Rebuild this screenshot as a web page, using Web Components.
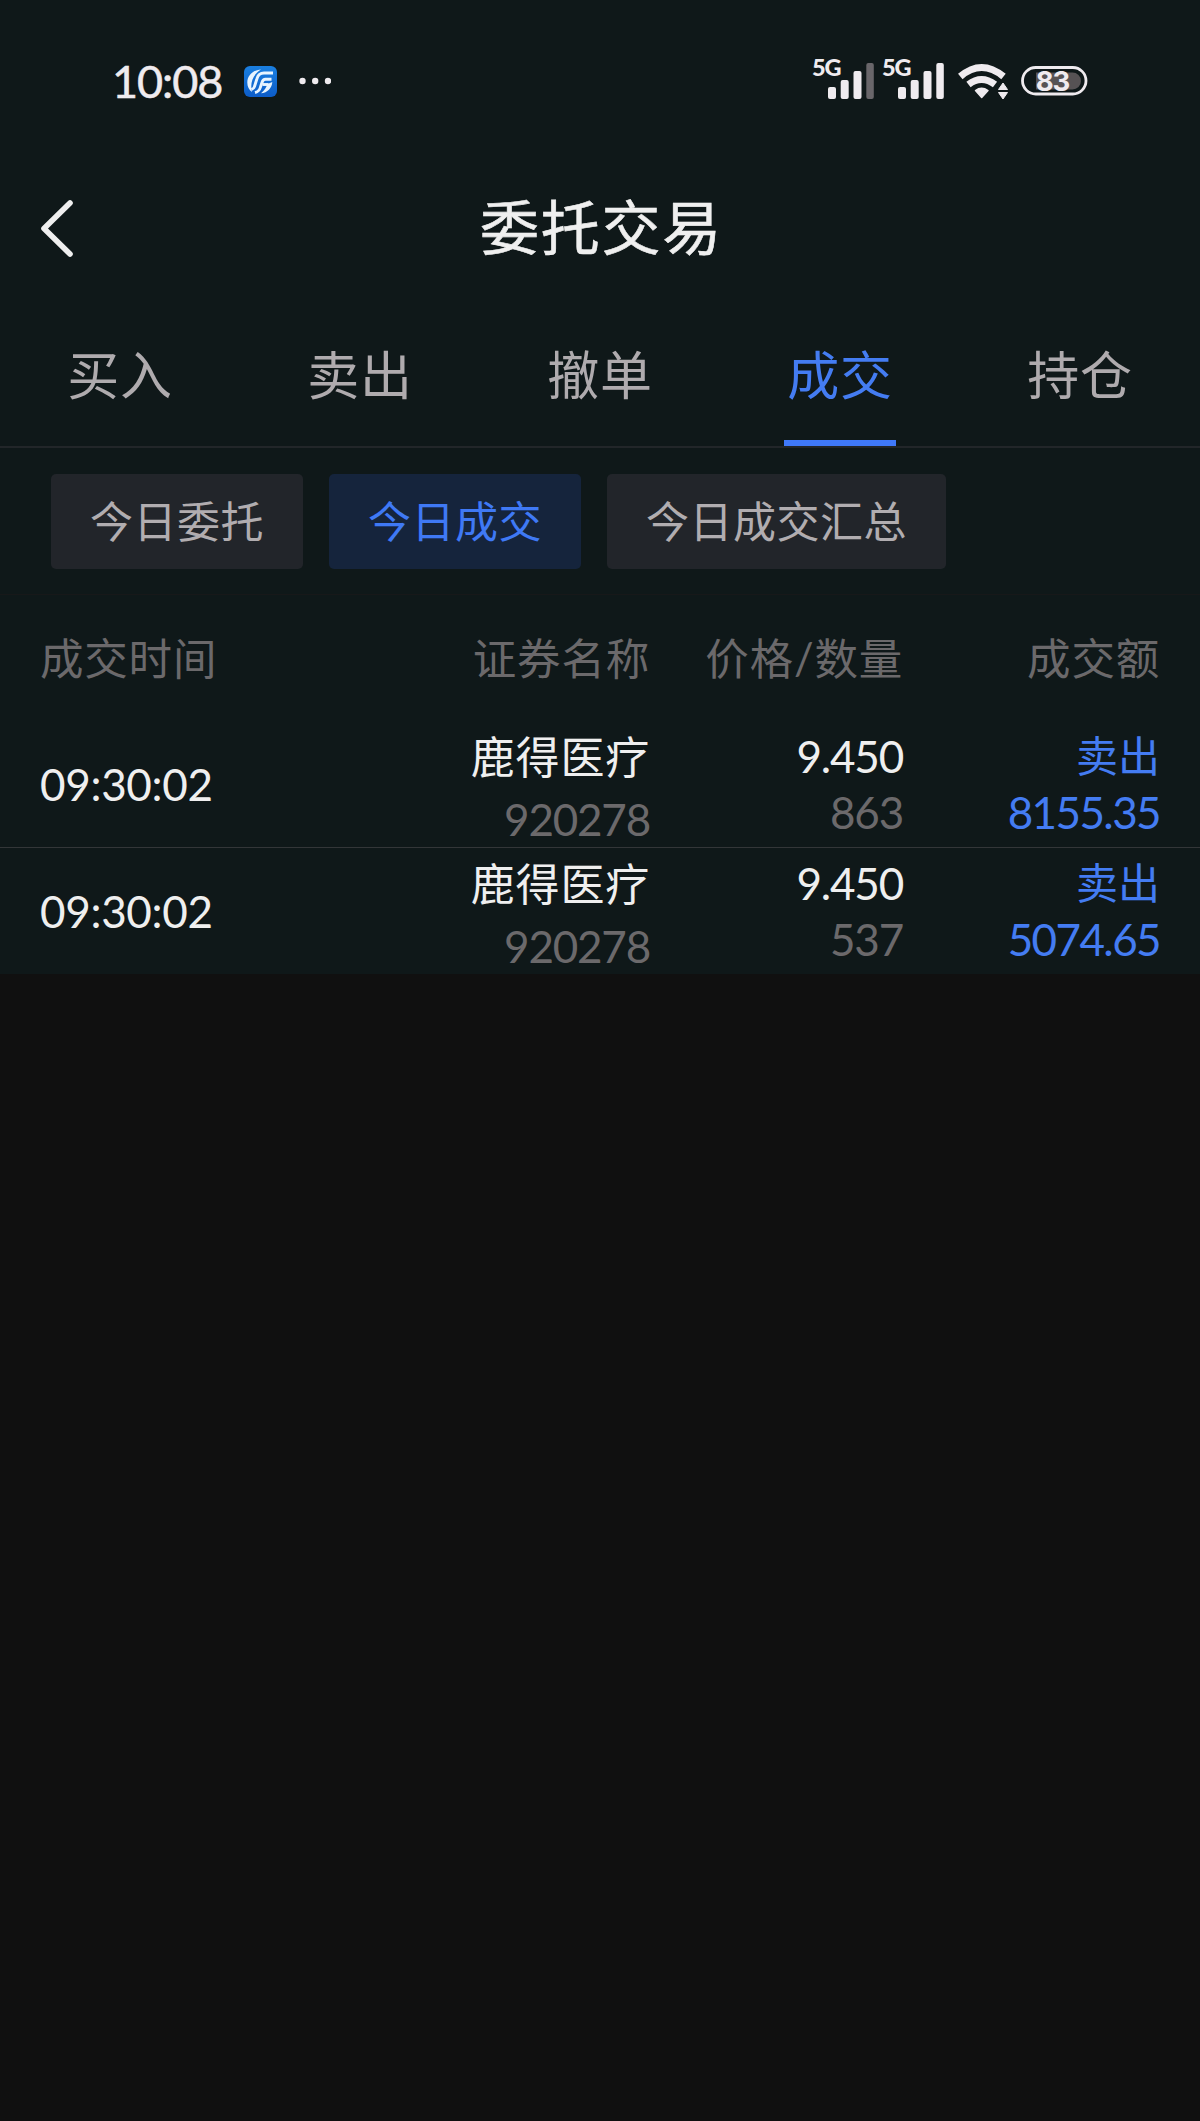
<!DOCTYPE html>
<html lang="zh-CN">
<head>
<meta charset="utf-8">
<title>委托交易</title>
<style>
  html, body { margin: 0; padding: 0; }
  body {
    background: #101010;
    font-family: Lato, "Noto Sans CJK SC", sans-serif;
    color: #efefef;
  }
</style>
</head>
<body>
<trade-page>
  <status-bar slot="status" time="10:08" battery="83"></status-bar>
  <page-header slot="header">委托交易</page-header>
  <trade-tabs slot="tabs">
    <trade-tab>买入</trade-tab>
    <trade-tab>卖出</trade-tab>
    <trade-tab>撤单</trade-tab>
    <trade-tab active>成交</trade-tab>
    <trade-tab>持仓</trade-tab>
  </trade-tabs>
  <chip-bar slot="chips">
    <filter-chip>今日委托</filter-chip>
    <filter-chip active>今日成交</filter-chip>
    <filter-chip>今日成交汇总</filter-chip>
  </chip-bar>
  <deal-table></deal-table>
</trade-page>

<script>
(function () {
  class TradePage extends HTMLElement {
    constructor() {
      super();
      this.attachShadow({ mode: "open" });
      this.shadowRoot.innerHTML =
        "<style>" +
        ":host{display:flex;flex-direction:column;width:1200px;background:#0f1819;}" +
        "</style>" +
        "<slot name='status'></slot>" +
        "<slot name='header'></slot>" +
        "<slot name='tabs'></slot>" +
        "<slot name='chips'></slot>" +
        "<slot></slot>";
    }
  }

  class SignalIcon extends HTMLElement {
    constructor() {
      super();
      this.attachShadow({ mode: "open" });
    }

    connectedCallback() {
      var last = this.hasAttribute("weak") ? "#69666a" : "#efebef";
      this.shadowRoot.innerHTML =
        "<style>" +
        ":host{display:block;position:relative;width:62px;height:45px;}" +
        "span{position:absolute;left:0;top:0;font-size:23.5px;line-height:24px;font-weight:900;letter-spacing:-1.2px;color:#efebef;}" +
        "svg{display:block;}" +
        "</style>" +
        "<svg width='62' height='45' fill='#efebef'>" +
        "<rect x='16' y='32' width='8' height='12' rx='2'/>" +
        "<rect x='28.7' y='25' width='8' height='19' rx='2'/>" +
        "<rect x='41.5' y='16' width='8' height='28' rx='2'/>" +
        "<rect x='54.3' y='8' width='7.5' height='36' rx='2' fill='" + last + "'/>" +
        "</svg>" +
        "<span>5G</span>";
    }
  }

  class StatusBar extends HTMLElement {
    constructor() {
      super();
      this.attachShadow({ mode: "open" });
    }

    connectedCallback() {
      this.shadowRoot.innerHTML =
        "<style>" +
        ":host{display:flex;align-items:center;justify-content:space-between;height:162px;box-sizing:border-box;padding:0 112px;color:#efebef;}" +
        ".left,.right{display:flex;align-items:center;}" +
        ".time{width:132px;font-size:45px;line-height:56px;letter-spacing:-1.1px;-webkit-text-stroke:.5px #efebef;}" +
        ".app{width:33px;height:31px;}" +
        ".dots{width:32px;height:8px;margin-left:22px;}" +
        "signal-icon{margin:0 8px 7px 0;}" +
        ".wifi{width:54px;height:40px;margin-left:5px;}" +
        ".battery{position:relative;width:67px;height:30px;margin-left:10px;}" +
        ".battery b{position:absolute;left:0;top:0;width:63px;text-align:center;font-family:Inter,sans-serif;font-size:27.5px;line-height:30px;font-weight:700;letter-spacing:-1px;}" +
        "svg{display:block;}" +
        "</style>" +
        "<div class='left'>" +
        "<span class='time'>" + this.getAttribute("time") + "</span>" +
        "<svg class='app' viewBox='0 0 33 31'>" +
        "<defs><linearGradient id='g' x1='0' y1='0' x2='0' y2='1'><stop offset='0' stop-color='#1a7fe0'/><stop offset='1' stop-color='#0c5cc8'/></linearGradient></defs>" +
        "<rect width='33' height='31' rx='6' fill='url(#g)'/>" +
        "<path d='M17 3.500C9 4 3.300 9.500 3.300 16.500C3.300 20.500 5 24 8 26C6 18 8 9 17 3.500z' fill='#e8f4ff'/>" +
        "<g fill='none' stroke='#e8f4ff' stroke-width='2.900'>" +
        "<path d='M29 7H20Q14.500 7 13 12.500L10.500 20.500Q10 22.500 7.500 23.500'/>" +
        "<path d='M27.500 13.300H21.500Q19 13.300 18 16.500L16.500 21Q15.300 25.500 11 26.500'/>" +
        "<path d='M24.500 18.500H18.500'/>" +
        "</g>" +
        "<path d='M28.300 16C28 22 23.500 26.800 17 27.300C20.500 24.500 22.500 21 23.500 18z' fill='#e8f4ff'/>" +
        "</svg>" +
        "<svg class='dots' viewBox='0 0 32 8' fill='#efebef'><circle cx='3.500' cy='4' r='3.200'/><circle cx='16.200' cy='4' r='3.200'/><circle cx='29' cy='4' r='3.200'/></svg>" +
        "</div>" +
        "<div class='right'>" +
        "<signal-icon weak></signal-icon>" +
        "<signal-icon></signal-icon>" +
        "<svg class='wifi' viewBox='0 0 54 40'>" +
        "<g fill='none' stroke='#efebef' stroke-width='7'>" +
        "<path d='M3.300 15.500Q24.500-2.500 46.500 15.500'/>" +
        "<path d='M11.500 23.500Q24.500 13.500 38 23.500'/>" +
        "</g>" +
        "<path d='M18.500 29.500Q24.500 25 31 29.500L24.700 36.500z' fill='#efebef' stroke='#efebef' stroke-width='1.500' stroke-linejoin='round'/>" +
        "<path d='M41.500 28.500L46 22l4.500 6.500zM41.500 31.500h9L46 38z' fill='#efebef' stroke='#efebef' stroke-linejoin='round'/>" +
        "</svg>" +
        "<div class='battery'>" +
        "<svg width='67' height='30'>" +
        "<path d='M15 6.500H51.500a8.500 8.500 0 0 1 0 17H15z' fill='#565254'/>" +
        "<rect x='1.500' y='1.500' width='63.500' height='26.500' rx='13.250' fill='none' stroke='#efebef' stroke-width='2.800'/>" +
        "</svg>" +
        "<b>" + this.getAttribute("battery") + "</b>" +
        "</div>" +
        "</div>";
    }
  }

  class PageHeader extends HTMLElement {
    constructor() {
      super();
      this.attachShadow({ mode: "open" });
      this.shadowRoot.innerHTML =
        "<style>" +
        ":host{display:grid;grid-template-columns:120px 1fr 117px;align-items:center;height:132px;}" +
        "svg{display:block;margin-left:40px;}" +
        "h1{margin:0;text-align:center;font-size:59px;line-height:82px;font-weight:400;letter-spacing:1.8px;-webkit-text-stroke:.6px #efefef;}" +
        "</style>" +
        "<svg width='36' height='62' fill='none' stroke='#efefef' stroke-width='5.600' stroke-linecap='round' stroke-linejoin='round'><path d='M30 6L4 31.500L30 57'/></svg>" +
        "<h1><slot></slot></h1>";
    }
  }

  class TradeTabs extends HTMLElement {
    constructor() {
      super();
      this.attachShadow({ mode: "open" });
      this.shadowRoot.innerHTML =
        "<style>" +
        ":host{display:grid;grid-template-columns:repeat(5,1fr);height:152px;border-bottom:2px solid #222629;}" +
        "</style>" +
        "<slot></slot>";
    }
  }

  class TradeTab extends HTMLElement {
    constructor() {
      super();
      this.attachShadow({ mode: "open" });
      this.shadowRoot.innerHTML =
        "<style>" +
        ":host{display:flex;flex-direction:column;align-items:center;justify-content:flex-end;color:#afabae;font-size:52px;}" +
        ":host([active]){color:#447cf2;}" +
        "span{line-height:80px;margin-bottom:25px;letter-spacing:.8px;}" +
        "i{display:block;width:112px;height:6px;}" +
        ":host([active]) i{background:#3f79fa;}" +
        "</style>" +
        "<span><slot></slot></span><i></i>";
    }
  }

  class ChipBar extends HTMLElement {
    constructor() {
      super();
      this.attachShadow({ mode: "open" });
      this.shadowRoot.innerHTML =
        "<style>" +
        ":host{display:flex;align-items:flex-start;gap:26px;height:147px;box-sizing:border-box;padding:26px 51px 0;border-bottom:1px solid #171819;}" +
        "</style>" +
        "<slot></slot>";
    }
  }

  class FilterChip extends HTMLElement {
    constructor() {
      super();
      this.attachShadow({ mode: "open" });
      this.shadowRoot.innerHTML =
        "<style>" +
        ":host{display:block;height:95px;line-height:95px;padding:0 39px;border-radius:5px;background:#22252a;color:#b1adb0;font-size:43px;letter-spacing:.5px;}" +
        ":host([active]){background:#15243c;color:#3f79f5;}" +
        "</style>" +
        "<slot></slot>";
    }
  }

  var DEALS = [
    { time: "09:30:02", name: "鹿得医疗", code: "920278", price: "9.450", count: "863", side: "卖出", amount: "8155.35" },
    { time: "09:30:02", name: "鹿得医疗", code: "920278", price: "9.450", count: "537", side: "卖出", amount: "5074.65" }
  ];

  class DealTable extends HTMLElement {
    constructor() {
      super();
      this.attachShadow({ mode: "open" });
    }

    connectedCallback() {
      var rows = "";
      for (var i = 0; i < DEALS.length; i++) {
        var d = DEALS[i];
        rows +=
          "<div class='row deal'>" +
          "<div class='time'>" + d.time + "</div>" +
          "<div class='name'><span>" + d.name + "</span><span class='sub'>" + d.code + "</span></div>" +
          "<div class='price'><span>" + d.price + "</span><span class='sub'>" + d.count + "</span></div>" +
          "<div class='amount'><span class='side'>" + d.side + "</span><span>" + d.amount + "</span></div>" +
          "</div>";
      }

      this.shadowRoot.innerHTML =
        "<style>" +
        ":host{display:block;}" +
        ".row{display:grid;grid-template-columns:360px 250px 253px 257px;padding:0 40px;font-size:44px;}" +
        ".row>:not(:first-child){text-align:right;}" +
        ".head{height:126px;line-height:127px;font-size:43.500px;letter-spacing:.8px;color:#6b696b;}" +
        ".deal{height:126px;letter-spacing:-1.2px;}" +
        ".deal+.deal{border-top:1px solid #333638;}" +
        ".deal>div{display:flex;flex-direction:column;}" +
        ".deal .time{line-height:127px;letter-spacing:-.3px;}" +
        ".name{padding-top:6px;}" +
        ".name span{line-height:60px;letter-spacing:.8px;}" +
        ".name .sub{line-height:52px;letter-spacing:-1.2px;margin-top:6px;}" +
        ".price,.amount{padding-top:7px;line-height:56px;}" +
        ".sub{color:#6b696b;}" +
        ".amount{color:#447cf2;letter-spacing:-1.6px;}" +
        ".side{font-size:42px;letter-spacing:0;line-height:56px;}" +
        "</style>" +
        "<div class='row head'><div>成交时间</div><div>证券名称</div><div>价格/数量</div><div>成交额</div></div>" +
        rows;
    }
  }

  customElements.define("trade-page", TradePage);
  customElements.define("signal-icon", SignalIcon);
  customElements.define("status-bar", StatusBar);
  customElements.define("page-header", PageHeader);
  customElements.define("trade-tabs", TradeTabs);
  customElements.define("trade-tab", TradeTab);
  customElements.define("chip-bar", ChipBar);
  customElements.define("filter-chip", FilterChip);
  customElements.define("deal-table", DealTable);
})();
</script>
</body>
</html>
